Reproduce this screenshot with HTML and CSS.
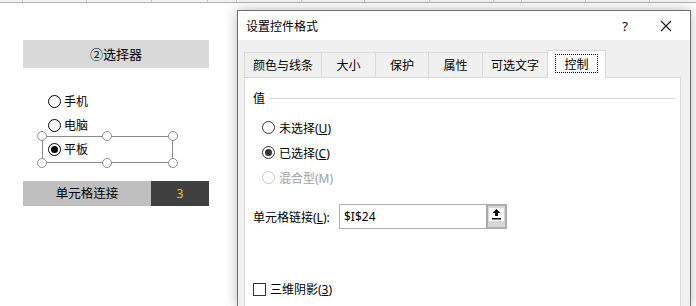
FILE: index.html
```
<!doctype html>
<html>
<head>
    <title>设置控件格式</title>
    <link rel="stylesheet" href="styles.css">
</head>
<body>
<div class="sheet">
    <div class="grid-top">
        <span class="col" style="width:23px"></span>
        <span class="col" style="width:64px"></span>
        <span class="col" style="width:65px"></span>
        <span class="col" style="width:56px"></span>
        <span class="col" style="width:29px"></span>
        <span class="col" style="width:65px"></span>
        <span class="col" style="width:63px"></span>
        <span class="col" style="width:65px"></span>
        <span class="col" style="width:64px"></span>
        <span class="col" style="width:28px"></span>
        <span class="col" style="width:64px"></span>
        <span class="col" style="width:64px"></span>
    </div>

    <div class="sheet-body">
        <div class="title-bar">②选择器</div>

        <div class="options">
            <div class="opt"><span class="radio"></span><span>手机</span></div>
            <div class="opt"><span class="radio"></span><span>电脑</span></div>
            <div class="opt"><span class="radio checked"></span><span>平板</span></div>

            <div class="sel-box">
                <span class="handle h-tl"></span>
                <span class="handle h-tm"></span>
                <span class="handle h-tr"></span>
                <span class="handle h-bl"></span>
                <span class="handle h-bm"></span>
                <span class="handle h-br"></span>
            </div>
        </div>

        <div class="link-row">
            <div class="link-label">单元格连接</div>
            <div class="link-value">3</div>
        </div>
    </div>
</div>

<div class="dialog">
    <div class="dlg-title">
        <span class="dlg-caption">设置控件格式</span>
        <span class="dlg-help">?</span>
        <span class="dlg-close">
            <svg width="12" height="12" viewBox="0 0 12 12">
                <path d="M1 1 L11 11 M11 1 L1 11" stroke="#1a1a1a" stroke-width="1.1" fill="none"/>
            </svg>
        </span>
    </div>

    <div class="dlg-body">
        <div class="tabs">
            <div class="tab" style="width:78px">颜色与线条</div>
            <div class="tab" style="width:55px">大小</div>
            <div class="tab" style="width:54px">保护</div>
            <div class="tab" style="width:55px">属性</div>
            <div class="tab" style="width:66px">可选文字</div>
            <div class="tab active" style="width:59px"><span class="focus">控制</span></div>
        </div>

        <div class="panel">
            <div class="group-head"><span>值</span><span class="rule"></span></div>

            <div class="choices">
                <div class="choice"><span class="dradio"></span><span>未选择(<u>U</u>)</span></div>
                <div class="choice"><span class="dradio checked"></span><span>已选择(<u>C</u>)</span></div>
                <div class="choice disabled"><span class="dradio"></span><span>混合型(M)</span></div>
            </div>

            <div class="field-row">
                <span class="field-label">单元格链接(<u>L</u>):</span>
                <div class="field">
                    <span class="field-text">$I$24</span>
                    <span class="collapse-btn">
                        <span class="btn-face">
                            <svg width="15" height="13" viewBox="0 0 15 13">
                                <path d="M7.5 1 L11.5 5 L9 5 L9 8 L6 8 L6 5 L3.5 5 Z" fill="#000"/>
                                <rect x="3" y="10" width="9" height="1.5" fill="#000"/>
                            </svg>
                        </span>
                    </span>
                </div>
            </div>

            <div class="check-row"><span class="cbox"></span><span>三维阴影(<u>3</u>)</span></div>
        </div>
    </div>
</div>
</body>
</html>
```

FILE: styles.css
```
html, body {
    margin: 0;
    padding: 0;
}

body {
    width: 696px;
    height: 306px;
    overflow: hidden;
    position: relative;
    background: #ffffff;
    color: #000;
    font-family: "Noto Sans", "Noto Sans CJK SC", sans-serif;
    font-size: 12px;
}

/* spreadsheet behind the dialog */

.grid-top {
    display: flex;
    height: 2px;
    background: #f2f2f2;
    border-bottom: 1px solid #b4b4b4;
}

.grid-top .col {
    flex: none;
    border-right: 1px solid #c6c6c6;
    box-sizing: border-box;
}

.sheet-body {
    width: 186px;
    padding-left: 23px;
}

.title-bar {
    margin-top: 37px;
    height: 28px;
    line-height: 28px;
    background: #d9d9d9;
    text-align: center;
    font-size: 13px;
}

.options {
    position: relative;
    margin-top: 21px;
    padding-left: 25px;
}

.opt {
    display: flex;
    align-items: center;
    height: 24px;
    gap: 3px;
}

.radio {
    width: 11px;
    height: 11px;
    border: 1px solid #000;
    border-radius: 50%;
    background: #fff;
    display: flex;
    align-items: center;
    justify-content: center;
}

.radio.checked::after {
    content: "";
    width: 7px;
    height: 7px;
    border-radius: 50%;
    background: #000;
}

.sel-box {
    position: absolute;
    left: 19px;
    top: 47px;
    width: 129px;
    height: 25px;
    border: 1px solid #8c8c8c;
}

.handle {
    position: absolute;
    width: 8px;
    height: 8px;
    border: 1.5px solid #8c8c8c;
    border-radius: 50%;
    background: #fff;
}

.h-tl { left: -6px; top: -6px; }
.h-tm { left: 59px; top: -6px; }
.h-tr { right: -6px; top: -6px; }
.h-bl { left: -6px; bottom: -6px; }
.h-bm { left: 59px; bottom: -6px; }
.h-br { right: -6px; bottom: -6px; }

.link-row {
    display: flex;
    margin-top: 20px;
    height: 25px;
    line-height: 25px;
}

.link-label {
    width: 128px;
    background: #bfbfbf;
    text-align: center;
    font-size: 12.5px;
}

.link-value {
    flex: 1;
    background: #404040;
    color: #ffc000;
    text-align: center;
}

/* dialog window */

.dialog {
    position: absolute;
    left: 237px;
    top: 10px;
    width: 452px;
    height: 296px;
    border: 1px solid #6f6f6f;
    border-bottom: none;
    background: #f0f0f0;
    box-shadow: 0 0 12px rgba(0, 0, 0, 0.28);
    display: flex;
    flex-direction: column;
    overflow: hidden;
}

.dlg-title {
    flex: none;
    height: 29px;
    background: #fff;
    display: flex;
    align-items: center;
    padding-left: 8px;
}

.dlg-caption {
    flex: 1;
}

.dlg-help {
    width: 20px;
    text-align: center;
    font-size: 13px;
    margin-right: 25px;
}

.dlg-close {
    width: 12px;
    height: 12px;
    margin-right: 18px;
    display: flex;
}

.dlg-body {
    flex: 1;
    padding: 10px 9px 0 6px;
    display: flex;
    flex-direction: column;
}

.tabs {
    flex: none;
    display: flex;
    align-items: flex-end;
    height: 27px;
}

.tab {
    flex: none;
    box-sizing: border-box;
    height: 25px;
    margin-right: -1px;
    border: 1px solid #d9d9d9;
    border-bottom: none;
    background: #f0f0f0;
    display: flex;
    align-items: center;
    justify-content: center;
}

.tab.active {
    height: 28px;
    margin-bottom: -1px;
    background: #fff;
    position: relative;
    z-index: 1;
    align-items: flex-start;
    padding-top: 3px;
}

.tab .focus {
    display: block;
    width: 43px;
    height: 19px;
    line-height: 19px;
    text-align: center;
    border: 1px dotted #000;
    box-sizing: border-box;
}

.panel {
    flex: 1;
    background: #fff;
    border: 1px solid #d9d9d9;
    border-bottom: none;
    padding: 12px 5px 0 8px;
}

.group-head {
    display: flex;
    align-items: center;
    height: 16px;
    gap: 5px;
}

.group-head .rule {
    flex: 1;
    border-top: 1px solid #dcdcdc;
}

.choices {
    margin-top: 9px;
    padding-left: 9px;
}

.choice {
    display: flex;
    align-items: center;
    height: 25px;
    gap: 4px;
}

.dradio {
    width: 11px;
    height: 11px;
    border: 1px solid #333;
    border-radius: 50%;
    display: flex;
    align-items: center;
    justify-content: center;
}

.dradio.checked::after {
    content: "";
    width: 7px;
    height: 7px;
    border-radius: 50%;
    background: #333;
}

.choice.disabled {
    color: #a0a0a0;
}

.choice.disabled .dradio {
    border-color: #c8c8c8;
}

.field-row {
    display: flex;
    align-items: center;
    margin-top: 14px;
    height: 25px;
}

.field-label {
    width: 86px;
}

.field {
    width: 168px;
    height: 25px;
    box-sizing: border-box;
    border: 1px solid #adadad;
    display: flex;
    align-items: center;
}

.field-text {
    flex: 1;
    padding-left: 4px;
}

.collapse-btn {
    width: 21px;
    height: 25px;
    margin: -1px -1px -1px 0;
    box-sizing: border-box;
    border: 2px solid #adadad;
    background: #d6d6d6;
    padding: 2px 0 0 1px;
}

.btn-face {
    display: block;
    width: 15px;
    height: 13px;
    background: #fff;
}

.btn-face svg {
    display: block;
}

.check-row {
    display: flex;
    align-items: center;
    margin-top: 52px;
    height: 16px;
    gap: 4px;
}

.cbox {
    width: 11px;
    height: 11px;
    border: 1px solid #333;
}
```
